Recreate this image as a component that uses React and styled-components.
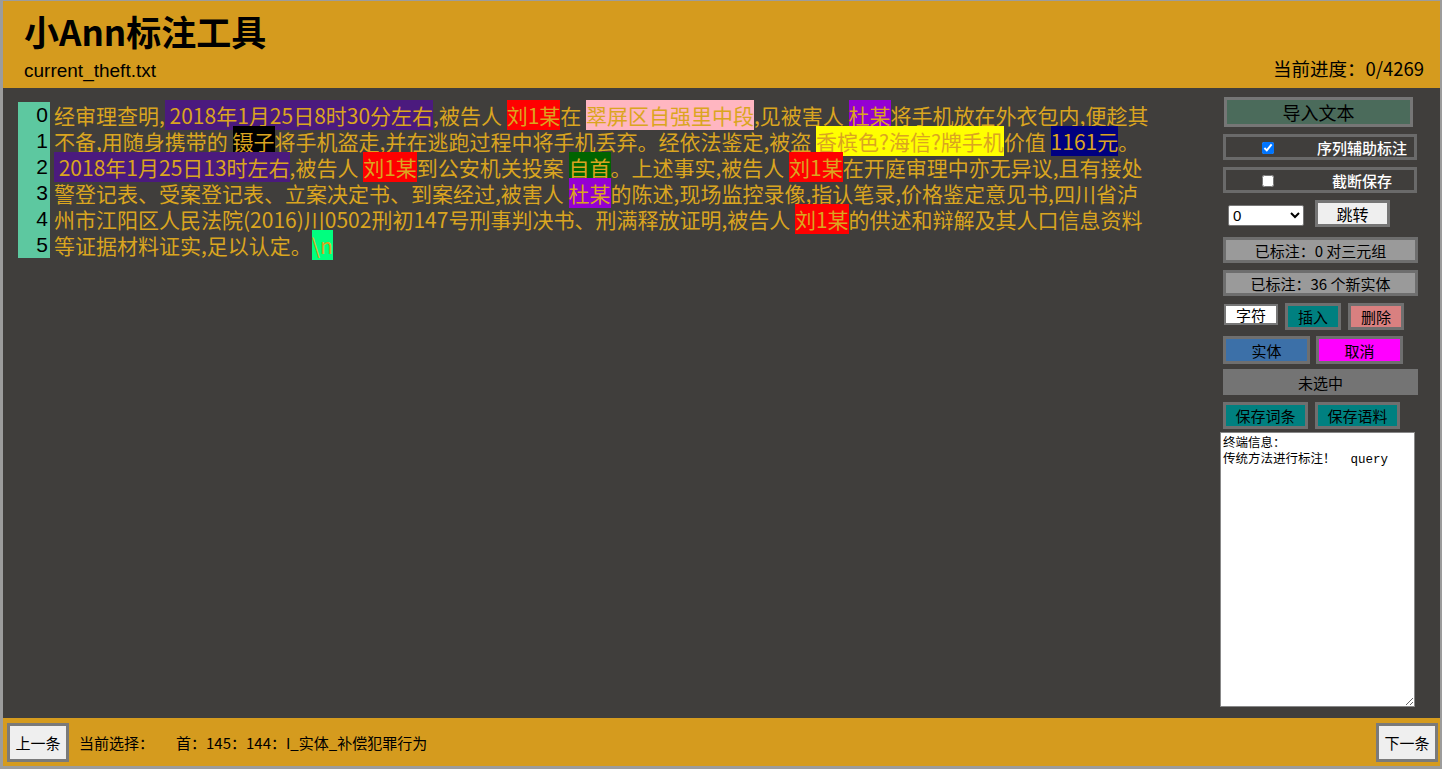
import React from "react";
import styled, { createGlobalStyle } from "styled-components";

const Global = createGlobalStyle`
  html, body { margin: 0; padding: 0; height: 769px; overflow: hidden; background: #9c9c9c; }
  body { font-family: "Noto Sans CJK SC", "Liberation Sans", sans-serif; }
  #root { height: 769px; }
`;

const Frame = styled.div`
  margin: 1px 2px 0 3px;
  height: 765px;
  display: flex;
  flex-direction: column;
  background: #403e3c;
`;

const Header = styled.header`
  height: 87px;
  background: #d59b1e;
  padding: 0 16px 0 21px;
  box-sizing: border-box;
  display: flex;
  flex-direction: column;
`;

const Title = styled.h1`
  margin: 6px 0 0 0;
  font-size: 35px;
  line-height: 48px;
  font-weight: 700;
  color: #000;
  font-family: "Noto Sans CJK SC", "Liberation Sans", sans-serif;
`;

const SubRow = styled.div`
  display: flex;
  justify-content: space-between;
  align-items: center;
  margin-top: 4px;
  line-height: 24px;
  color: #000;
`;

const FileName = styled.span`
  font-size: 19px;
  font-family: "Liberation Sans", "Noto Sans CJK SC", sans-serif;
`;

const Progress = styled.span`
  font-size: 18.5px;
  margin-top: -6px;
`;

const Main = styled.main`
  flex: 1;
  display: flex;
  justify-content: space-between;
  min-height: 0;
`;

const TextPane = styled.div`
  padding: 14px 0 0 15px;
  display: flex;
  flex-direction: column;
`;

const Line = styled.div`
  display: flex;
  height: 26px;
  align-items: center;
`;

const Num = styled.span`
  width: 32px;
  height: 26px;
  background: #5dc8a0;
  color: #000;
  font-size: 21px;
  line-height: 26px;
  text-align: right;
  padding-right: 2px;
  box-sizing: border-box;
  font-family: "Liberation Sans", sans-serif;
`;

const Txt = styled.span`
  padding-left: 4px;
  font-size: 21px;
  line-height: 26px;
  color: #daa520;
  white-space: pre;
`;

const Mark = styled.span`
  background: ${(p) => p.$bg};
`;

const Panel = styled.aside`
  width: 198px;
  margin-right: 22px;
  padding-top: 9px;
  display: flex;
  flex-direction: column;
`;

const Btn = styled.button`
  box-sizing: border-box;
  width: ${(p) => p.$w}px;
  height: ${(p) => p.$h || 27}px;
  margin: ${(p) => p.$mt || 0}px 0 0 ${(p) => p.$ml || 0}px;
  border: 3px solid ${(p) => p.$bd || "#6f6f6f"};
  background: ${(p) => p.$bg};
  color: #000;
  font-family: "Noto Sans CJK SC", sans-serif;
  font-size: ${(p) => p.$fs || 15}px;
  padding: 0;
  line-height: 1;
  display: flex;
  align-items: center;
  justify-content: center;
`;

const Box = styled.div`
  box-sizing: border-box;
  width: 195px;
  height: 26px;
  margin: ${(p) => p.$mt || 0}px 0 0 3px;
  border: 3px solid ${(p) => p.$bd};
  background: ${(p) => p.$bg};
  color: #000;
  font-size: 15px;
  display: flex;
  align-items: center;
  justify-content: center;
`;

const CheckRow = styled.label`
  box-sizing: border-box;
  width: 194px;
  height: 26px;
  margin: ${(p) => p.$mt}px 0 0 3px;
  border: 3px solid #6a6a6a;
  display: grid;
  grid-template-columns: 84px 1fr;
  align-items: center;
  color: #fff;
  font-size: 15px;
  font-weight: 500;
  input { margin: 0; justify-self: center; width: 12px; height: 12px; }
  span { justify-self: center; }
`;

const Row = styled.div`
  display: flex;
  align-items: flex-start;
  margin-top: ${(p) => p.$mt}px;
  padding-left: ${(p) => p.$pl || 3}px;
  gap: ${(p) => p.$gap || 6}px;
`;

const Select = styled.select`
  width: 76px;
  height: 21px;
  margin-top: 5px;
  font-size: 15px;
  background: #fff;
  border: 1px solid #777;
  border-radius: 2px;
  font-family: "Liberation Sans", sans-serif;
`;

const CharBox = styled.div`
  box-sizing: border-box;
  width: 54px;
  height: 21px;
  margin-top: 1px;
  border: 2px solid #777;
  background: #fff;
  font-size: 15px;
  display: flex;
  align-items: center;
  justify-content: center;
  color: #000;
`;

const Terminal = styled.textarea`
  box-sizing: border-box;
  width: 195px;
  height: 275px;
  margin-top: 3px;
  border: 1px solid #888;
  background: #fff;
  padding: 3px 2px;
  font-family: "Liberation Mono", "Noto Sans CJK SC", monospace;
  font-size: 12.5px;
  line-height: 16px;
  color: #000;
  resize: vertical;
`;

const Footer = styled.footer`
  height: 48px;
  background: #d59b1e;
  display: flex;
  align-items: center;
  padding: 0 2px 0 4px;
  font-size: 15px;
  color: #000;
`;

const NavBtn = styled.button`
  box-sizing: border-box;
  width: 62px;
  height: 39px;
  background: #efefef;
  border: 3px solid #7a7a7a;
  font-family: "Noto Sans CJK SC", sans-serif;
  font-size: 15px;
  color: #000;
  padding: 0;
`;

const Sel = styled.span`
  margin-left: ${(p) => p.$ml}px;
  white-space: pre;
`;

const Spacer = styled.div`
  flex: 1;
`;

const C = {
  indigo: "#4b1a7e",
  red: "#ff0000",
  pink: "#ffb6c1",
  violet: "#9400d3",
  black: "#000",
  yellow: "#ffff00",
  navy: "#000080",
  green: "#006400",
  spring: "#00ff7f",
};

const lines = [
  [
    "经审理查明,",
    [" 2018年1月25日8时30分左右", C.indigo],
    ",被告人 ",
    ["刘1某", C.red],
    "在 ",
    ["翠屏区自强里中段", C.pink],
    ",见被害人 ",
    ["杜某", C.violet],
    "将手机放在外衣包内,便趁其",
  ],
  [
    "不备,用随身携带的 ",
    ["镊子", C.black],
    "将手机盗走,并在逃跑过程中将手机丢弃。经依法鉴定,被盗 ",
    ["香槟色?海信?牌手机", C.yellow],
    "价值 ",
    ["1161元", C.navy],
    "。",
  ],
  [
    [" 2018年1月25日13时左右", C.indigo],
    ",被告人 ",
    ["刘1某", C.red],
    "到公安机关投案 ",
    ["自首", C.green],
    "。上述事实,被告人 ",
    ["刘1某", C.red],
    "在开庭审理中亦无异议,且有接处",
  ],
  [
    "警登记表、受案登记表、立案决定书、到案经过,被害人 ",
    ["杜某", C.violet],
    "的陈述,现场监控录像,指认笔录,价格鉴定意见书,四川省泸",
  ],
  [
    "州市江阳区人民法院(2016)川0502刑初147号刑事判决书、刑满释放证明,被告人 ",
    ["刘1某", C.red],
    "的供述和辩解及其人口信息资料",
  ],
  ["等证据材料证实,足以认定。", ["\\n", C.spring]],
];

export default function App() {
  return (
    <>
      <Global />
      <Frame>
        <Header>
          <Title>小Ann标注工具</Title>
          <SubRow>
            <FileName>current_theft.txt</FileName>
            <Progress>当前进度：0/4269</Progress>
          </SubRow>
        </Header>
        <Main>
          <TextPane>
            {lines.map((parts, i) => (
              <Line key={i}>
                <Num>{i}</Num>
                <Txt>
                  {parts.map((p, j) =>
                    typeof p === "string" ? (
                      <React.Fragment key={j}>{p}</React.Fragment>
                    ) : (
                      <Mark key={j} $bg={p[1]}>
                        {p[0]}
                      </Mark>
                    )
                  )}
                </Txt>
              </Line>
            ))}
          </TextPane>
          <Panel>
            <Btn $w={189} $h={30} $ml={4} $bg="#4b6b5b" $bd="#767676" $fs={18}>
              导入文本
            </Btn>
            <CheckRow $mt={7}>
              <input type="checkbox" defaultChecked />
              <span>序列辅助标注</span>
            </CheckRow>
            <CheckRow $mt={7}>
              <input type="checkbox" />
              <span>截断保存</span>
            </CheckRow>
            <Row $mt={7} $pl={8} $gap={11}>
              <Select defaultValue="0">
                <option value="0">0</option>
              </Select>
              <Btn $w={75} $bg="#efefef" $bd="#757575" $fs={16}>
                跳转
              </Btn>
            </Row>
            <Box $mt={10} $bg="#9a9a9a" $bd="#6e6e6e">
              已标注：0 对三元组
            </Box>
            <Box $mt={7} $bg="#9a9a9a" $bd="#6e6e6e">
              已标注：36 个新实体
            </Box>
            <Row $mt={7} $pl={4} $gap={7}>
              <CharBox>字符</CharBox>
              <Btn $w={56} $bg="#008080">插入</Btn>
              <Btn $w={56} $bg="#d98080">删除</Btn>
            </Row>
            <Row $mt={6} $pl={3} $gap={6}>
              <Btn $w={87} $h={28} $bg="#3c70a8">实体</Btn>
              <Btn $w={87} $h={28} $bg="#ff00ff">取消</Btn>
            </Row>
            <Box $mt={5} $bg="#747474" $bd="#747474">
              未选中
            </Box>
            <Row $mt={7} $pl={3} $gap={7}>
              <Btn $w={85} $bg="#008080">保存词条</Btn>
              <Btn $w={85} $bg="#008080">保存语料</Btn>
            </Row>
            <Terminal
              readOnly
              value={"终端信息：\n传统方法进行标注！  query"}
            />
          </Panel>
        </Main>
        <Footer>
          <NavBtn>上一条</NavBtn>
          <Sel $ml={10}>当前选择：</Sel>
          <Sel $ml={22}>首：145：144：I_实体_补偿犯罪行为</Sel>
          <Spacer />
          <NavBtn>下一条</NavBtn>
        </Footer>
      </Frame>
    </>
  );
}
